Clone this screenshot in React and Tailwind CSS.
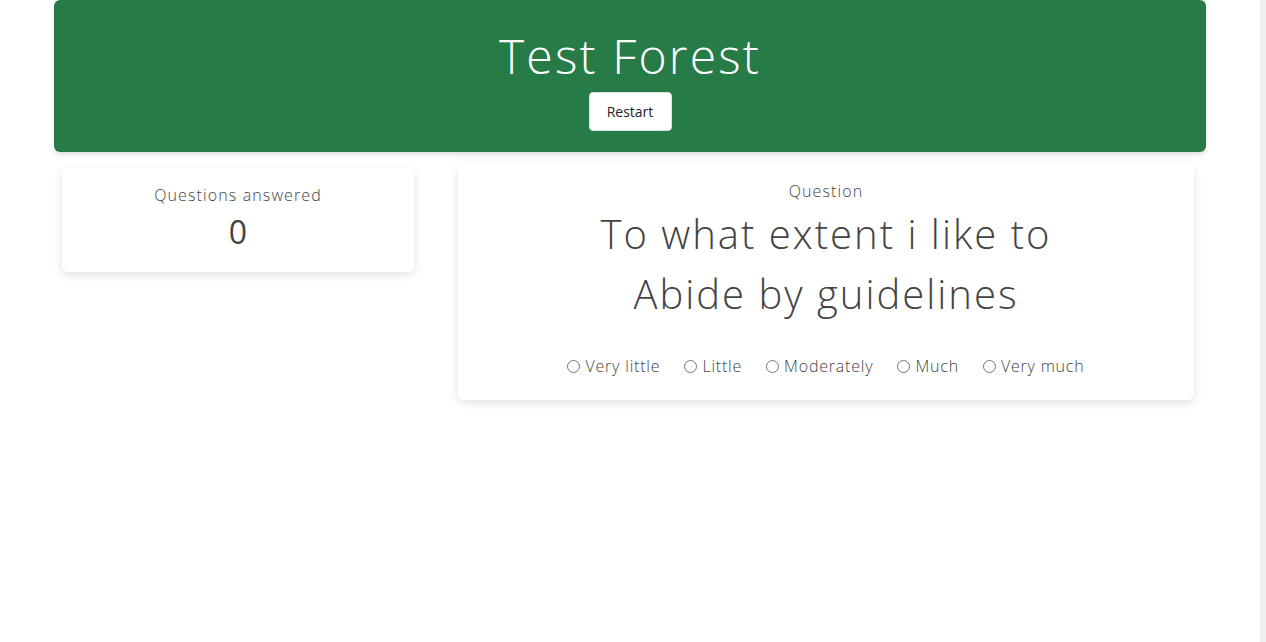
import React, { useState } from 'react';

const options = ['Very little', 'Little', 'Moderately', 'Much', 'Very much'];

const App = () => {
  const [answer, setAnswer] = useState(null);

  return (
    <div className="flex w-full h-screen bg-white text-[#444444]" style={{ fontFamily: '"Open Sans", sans-serif' }}>
      <div className="flex-1">
        <div className="mx-auto w-[1152px]">
          <div className="bg-[#267b46] rounded-md h-[152px] flex flex-col items-center pt-[26px] shadow-md">
            <h1 className="text-white text-[48px] leading-[60px] font-light tracking-[0.045em]">Test Forest</h1>
            <button
              className="mt-[6px] bg-white text-[#222] rounded-[4px] w-[83px] h-[39px] text-[14px] border border-[#e0e0e0]"
              onClick={() => setAnswer(null)}
            >
              Restart
            </button>
          </div>

          <div className="flex items-start">
            <div className="ml-[8px] mt-[16px] w-[352px] h-[104px] bg-white rounded-md shadow-[0_3px_10px_rgba(0,0,0,0.12)] flex flex-col items-center pt-[16px]">
              <div className="text-[16px] leading-[22px] font-light tracking-[0.07em]">Questions answered</div>
              <div className="text-[32px] leading-[44px] mt-[4px] font-medium">0</div>
            </div>

            <div className="ml-[44px] mt-[12px] w-[736px] h-[236px] bg-white rounded-md shadow-[0_3px_10px_rgba(0,0,0,0.12)] flex flex-col items-center pt-[16px]">
              <div className="text-[16px] leading-[22px] font-light tracking-[0.07em]">Question</div>
              <div className="text-[40px] leading-[60px] font-light text-center mt-[2px] tracking-[0.05em]">
                To what extent i like to
                <br />
                Abide by guidelines
              </div>
              <div className="flex items-center mt-[30px] gap-[24px] text-[16px] font-light tracking-[0.05em]">
                {options.map((o) => (
                  <label key={o} className="flex items-center gap-[5px] cursor-pointer">
                    <input
                      type="radio"
                      name="answer"
                      checked={answer === o}
                      onChange={() => setAnswer(o)}
                      className="w-[13px] h-[13px] m-0"
                    />
                    <span>{o}</span>
                  </label>
                ))}
              </div>
            </div>
          </div>
        </div>
      </div>
      <div className="w-[6px] h-full bg-[#f0f0f0]"></div>
    </div>
  );
};

export default App;
